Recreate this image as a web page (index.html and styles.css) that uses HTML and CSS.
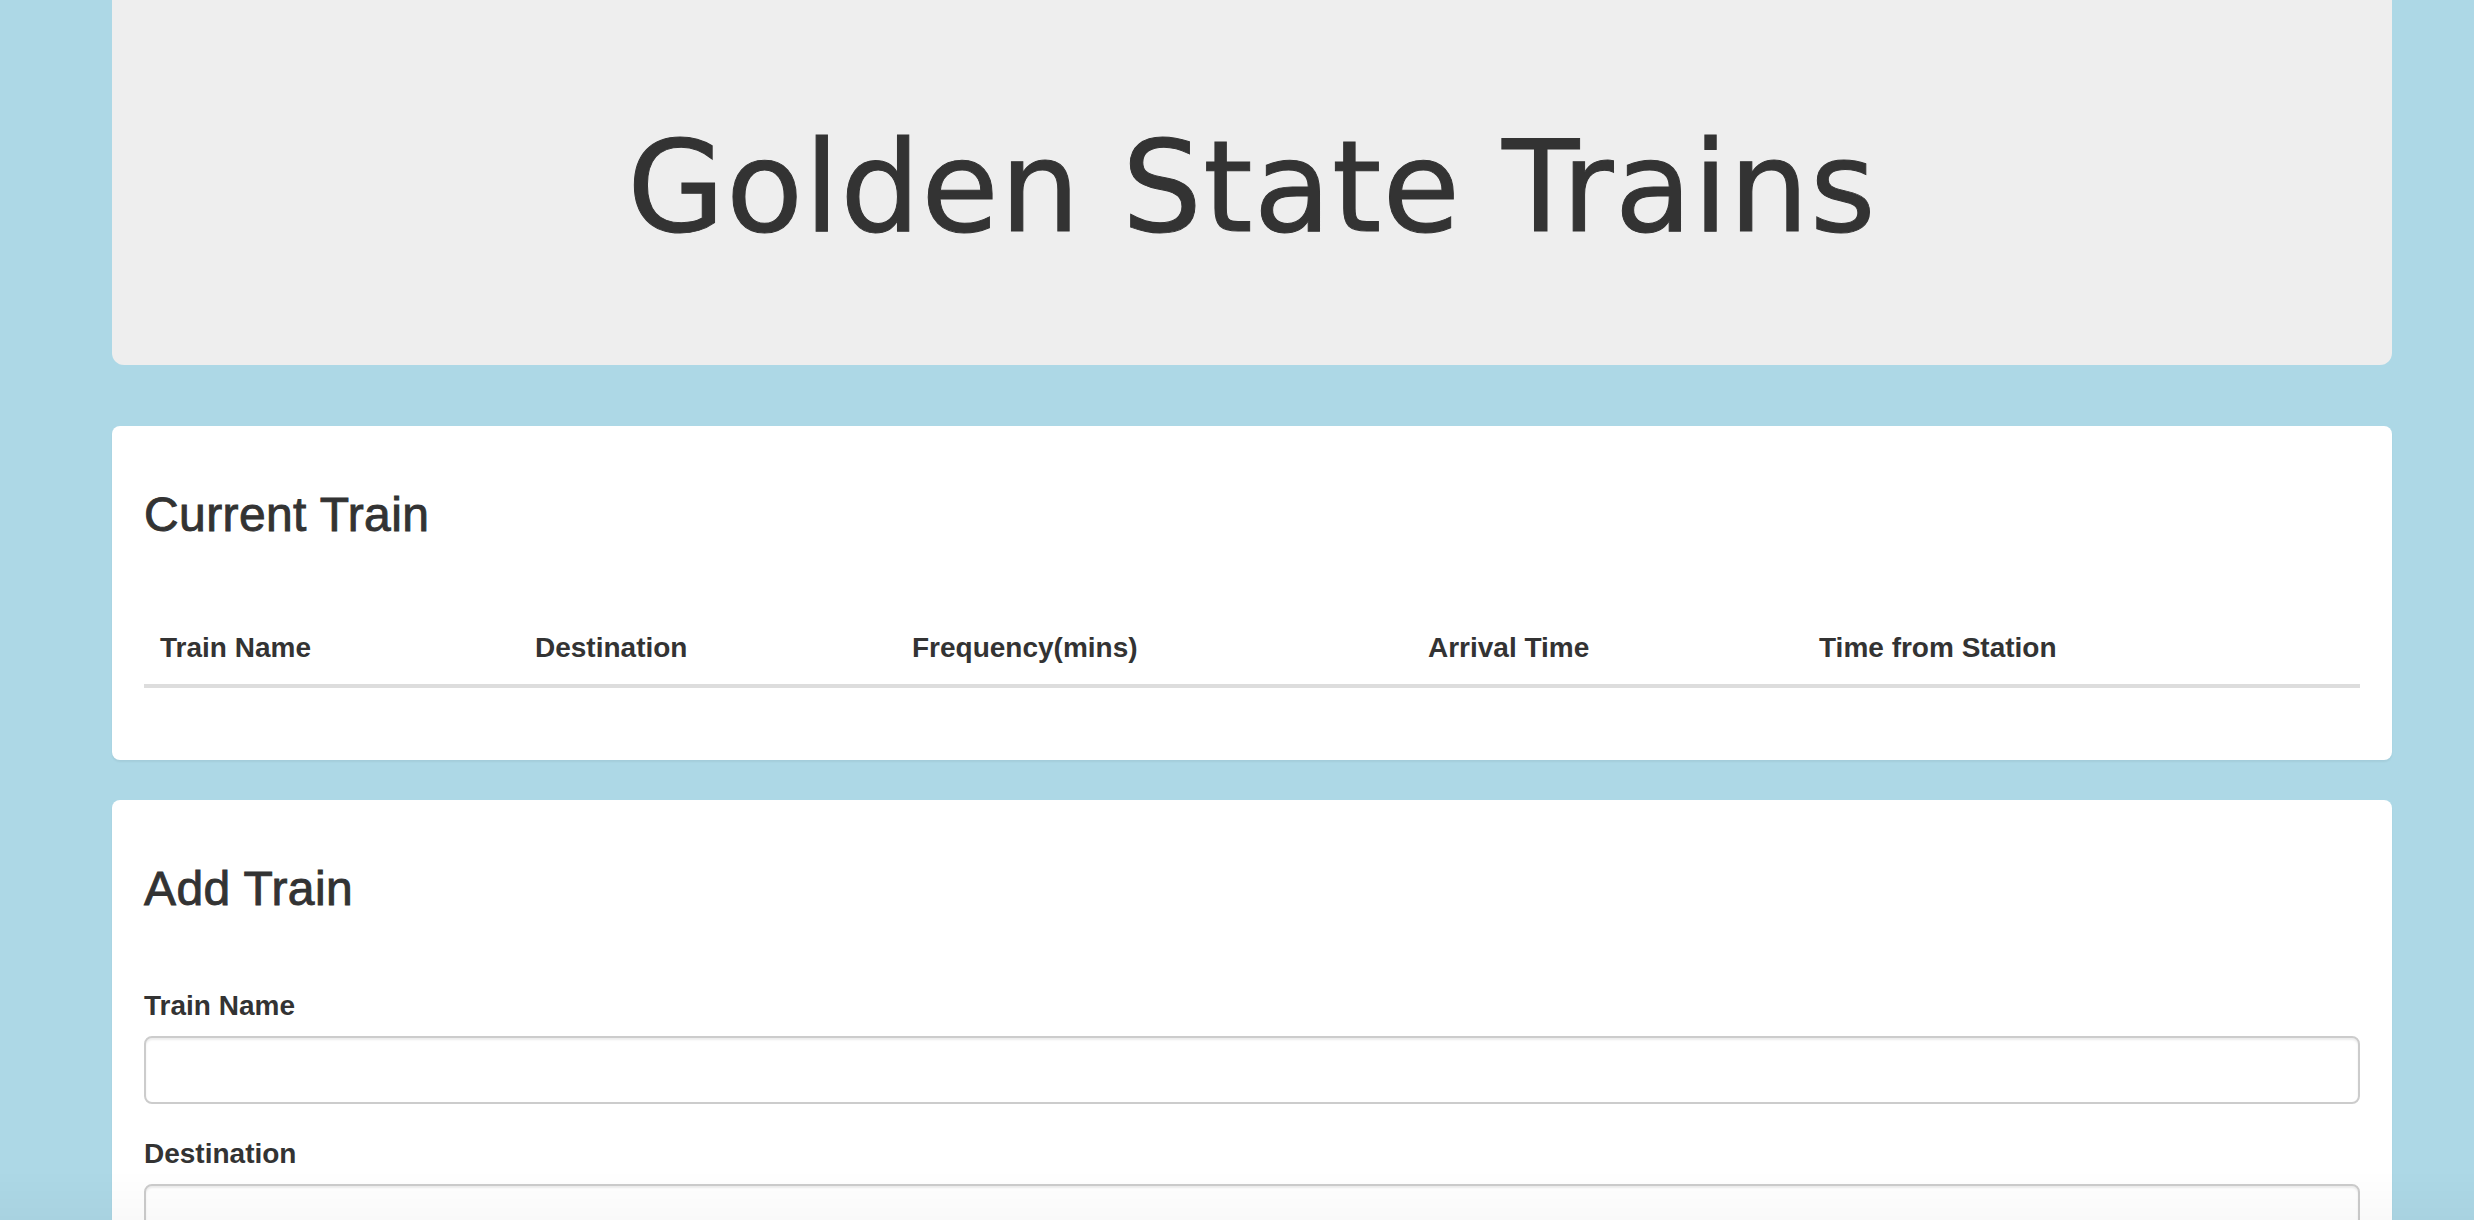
FILE: index.html
```html
<!DOCTYPE html>
<html lang="en">
<head>
<meta charset="utf-8">
<title>Golden State Trains</title>
<link rel="stylesheet" href="styles.css">
</head>
<body>
<div class="container">
  <header class="jumbotron">
    <h1 class="title">Golden State Trains</h1>
  </header>

  <section class="panel">
    <h3 class="panel-title">Current Train</h3>
    <table class="train-table">
      <colgroup>
        <col class="col-name">
        <col class="col-dest">
        <col class="col-freq">
        <col class="col-arr">
        <col class="col-time">
      </colgroup>
      <thead>
        <tr>
          <th>Train Name</th>
          <th>Destination</th>
          <th>Frequency(mins)</th>
          <th>Arrival Time</th>
          <th>Time from Station</th>
        </tr>
      </thead>
      <tbody></tbody>
    </table>
  </section>

  <section class="panel">
    <h3 class="panel-title">Add Train</h3>
    <form class="train-form">
      <div class="form-group">
        <label class="form-label" for="train-name">Train Name</label>
        <input class="form-control" id="train-name" type="text">
      </div>
      <div class="form-group">
        <label class="form-label" for="destination">Destination</label>
        <input class="form-control" id="destination" type="text">
      </div>
    </form>
  </section>
</div>
</body>
</html>
```

FILE: styles.css
```css
html, body {
  margin: 0;
  padding: 0;
}

body {
  background: #add8e6;
  color: #333;
  font-family: "Liberation Sans", Arial, sans-serif;
  font-size: 28px;
  line-height: 40px;
  overflow: hidden;
}

body::after {
  content: "";
  position: fixed;
  left: 0;
  right: 0;
  bottom: 0;
  height: 50px;
  background: linear-gradient(rgba(0, 0, 0, 0), rgba(0, 0, 0, 0.025));
  pointer-events: none;
}

.container {
  margin: 0 82px 0 112px;
}

.jumbotron {
  background: #eee;
  border-radius: 0 0 12px 12px;
  padding: 118px 0 108px;
  margin-bottom: 61px;
}

.title {
  margin: 0;
  font-family: "DejaVu Sans", Verdana, sans-serif;
  font-weight: 400;
  font-size: 126px;
  line-height: 139px;
  letter-spacing: 1.1px;
  text-align: center;
  color: #333;
  -webkit-text-stroke: 1px #333;
}

.panel {
  background: #fff;
  border-radius: 8px;
  padding: 32px;
  margin-bottom: 40px;
  box-shadow: 0 2px 2px rgba(0, 0, 0, 0.05);
}

.panel-title {
  margin: 31px 0 70px;
  font-size: 48px;
  line-height: 52.8px;
  font-weight: 500;
  letter-spacing: 0.4px;
  -webkit-text-stroke: 0.9px #333;
}

.train-table {
  width: 100%;
  border-collapse: collapse;
  table-layout: fixed;
  margin-bottom: 40px;
}

.col-name { width: 375px; }
.col-dest { width: 377px; }
.col-freq { width: 516px; }
.col-arr { width: 391px; }
.col-time { width: 557px; }

.train-table th {
  text-align: left;
  font-weight: 700;
  padding: 16px;
  line-height: 40px;
  border-bottom: 4px solid #ddd;
  white-space: nowrap;
}

.form-group {
  margin-bottom: 30px;
}

.form-label {
  display: block;
  font-weight: 700;
  margin-bottom: 10px;
}

.form-control {
  display: block;
  box-sizing: border-box;
  width: 100%;
  height: 68px;
  padding: 12px 24px;
  font: inherit;
  color: #555;
  background: #fff;
  border: 2px solid #ccc;
  border-radius: 8px;
  box-shadow: inset 0 2px 2px rgba(0, 0, 0, 0.075);
  margin: 0;
}
```
